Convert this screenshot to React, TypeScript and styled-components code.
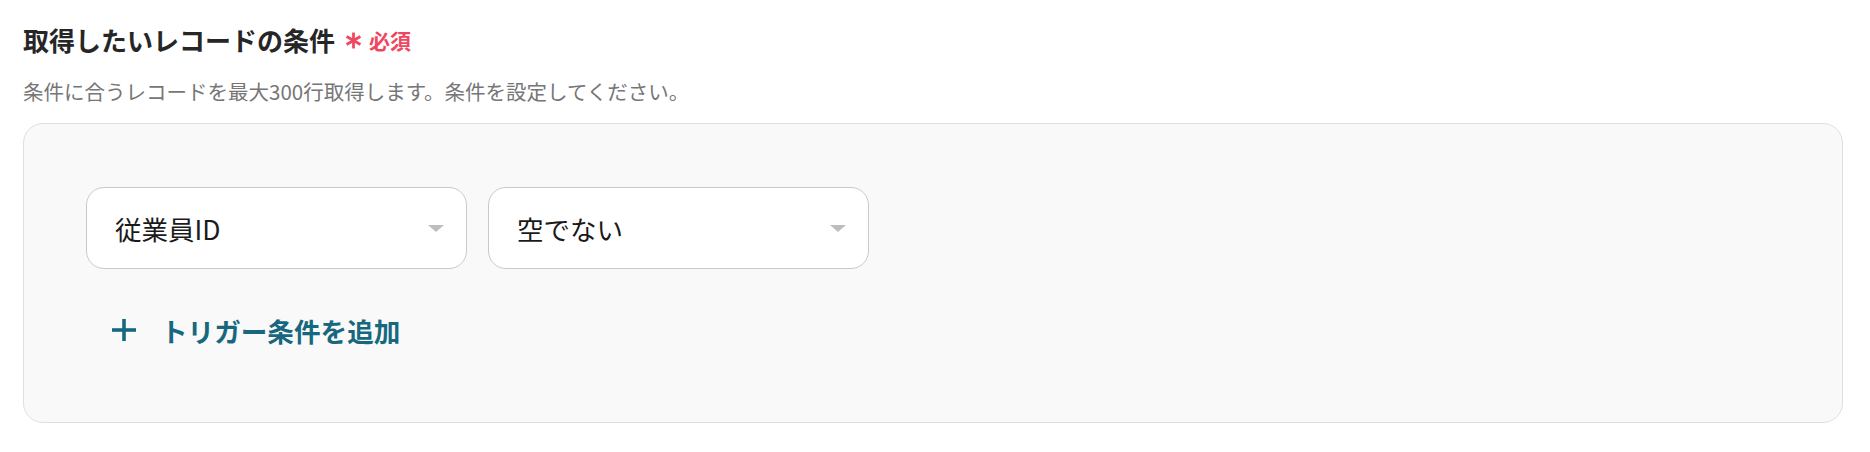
import React from "react";
import styled, { createGlobalStyle } from "styled-components";

const GlobalStyle = createGlobalStyle`
  html, body {
    margin: 0;
    padding: 0;
    background: #ffffff;
  }
  body {
    font-family: "Noto Sans CJK JP", "Noto Sans", sans-serif;
  }
`;

const Page = styled.div`
  padding: 22px 27px 0 23px;
`;

const Heading = styled.div`
  display: flex;
  align-items: center;
  gap: 10px;
  height: 36px;
`;

const Title = styled.h2`
  margin: 0;
  font-size: 26px;
  line-height: 36px;
  font-weight: 700;
  color: #262626;
`;

const Required = styled.span`
  display: flex;
  align-items: center;
  gap: 7px;
  font-size: 21px;
  font-weight: 700;
  color: #f0475f;
`;

const Description = styled.p`
  margin: 18px 0 0;
  font-size: 20.5px;
  line-height: 30px;
  color: #767676;
`;

const Panel = styled.div`
  margin-top: 17px;
  padding: 63px 62px 72px;
  border: 1px solid #dfdfe3;
  border-radius: 20px;
  background: #f9f9f9;
`;

const Row = styled.div`
  display: flex;
  gap: 21px;
`;

const Select = styled.div`
  box-sizing: border-box;
  display: flex;
  align-items: center;
  justify-content: space-between;
  width: 381px;
  height: 82px;
  padding: 0 22px 0 28px;
  border: 1px solid #c9c9c9;
  border-radius: 18px;
  background: #ffffff;
  font-size: 26.5px;
  color: #1a1a1a;
`;

const Caret = styled.span`
  width: 0;
  height: 0;
  border-left: 8px solid transparent;
  border-right: 8px solid transparent;
  border-top: 7px solid #bdbdbd;
`;

const AddButton = styled.button`
  display: flex;
  align-items: center;
  gap: 25px;
  height: 40px;
  margin: 41px 0 0 26px;
  padding: 0;
  border: none;
  background: none;
  font-family: inherit;
  font-size: 26.6px;
  font-weight: 700;
  color: #17687e;
  cursor: pointer;
`;

const Star = () => (
  <svg width="17" height="17" viewBox="0 0 16 16">
    <g stroke="#f0475f" strokeWidth="2.6" strokeLinecap="butt">
      <line x1="8" y1="0.5" x2="8" y2="15.5" />
      <line x1="1.5" y1="4.25" x2="14.5" y2="11.75" />
      <line x1="1.5" y1="11.75" x2="14.5" y2="4.25" />
    </g>
  </svg>
);

const Plus = () => (
  <svg width="24" height="24" viewBox="0 0 24 24">
    <g stroke="#17687e" strokeWidth="3.6">
      <line x1="12" y1="1" x2="12" y2="23" />
      <line x1="0" y1="12" x2="24" y2="12" />
    </g>
  </svg>
);

const conditions = [
  { id: "field", label: "従業員ID" },
  { id: "operator", label: "空でない" },
];

export default function App() {
  return (
    <Page>
      <GlobalStyle />
      <Heading>
        <Title>取得したいレコードの条件</Title>
        <Required>
          <Star />
          必須
        </Required>
      </Heading>
      <Description>
        条件に合うレコードを最大300行取得します。条件を設定してください。
      </Description>
      <Panel>
        <Row>
          {conditions.map((c) => (
            <Select key={c.id}>
              <span>{c.label}</span>
              <Caret />
            </Select>
          ))}
        </Row>
        <AddButton>
          <Plus />
          トリガー条件を追加
        </AddButton>
      </Panel>
    </Page>
  );
}
